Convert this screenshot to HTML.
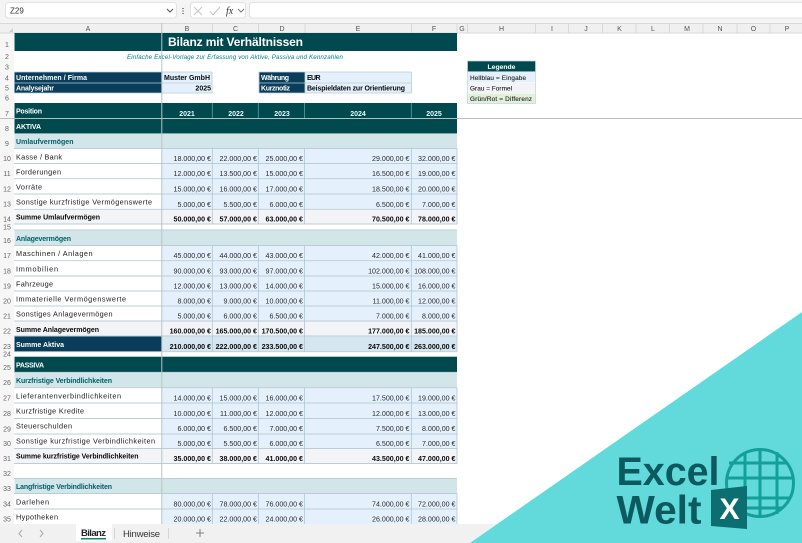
<!DOCTYPE html>
<html lang="de"><head><meta charset="utf-8"><title>Bilanz</title>
<style>
html,body{margin:0;padding:0;width:802px;height:543px;overflow:hidden;background:#fff}
svg{display:block;font-family:"Liberation Sans",sans-serif;filter:blur(.28px)}
.h{font-size:7px;fill:#555;text-anchor:middle}
.r{font-size:7px;fill:#666;text-anchor:middle}
.l{font-size:7.3px;fill:#1c1c1c}
.b{font-size:7px;font-weight:bold;fill:#0a0a0a}
.s{font-size:7px;font-weight:bold;fill:#005f69}
.w{font-size:7px;font-weight:bold;fill:#fff}
.n{font-size:7.1px;fill:#2a2a2a;text-anchor:end}
.nb{font-size:7.1px;fill:#0a0a0a;font-weight:bold;text-anchor:end}
.y{font-size:7px;fill:#e4fbff;font-weight:bold;text-anchor:middle}
.lg{font-size:6.4px;fill:#222;stroke:#222;stroke-width:.12px}
</style></head><body>
<svg width="802" height="543" viewBox="0 0 802 543" xmlns="http://www.w3.org/2000/svg">
<rect width="802" height="543" fill="#fff"/>
<!-- toolbar -->
<rect width="802" height="23" fill="#f4f4f4"/>
<rect x="5.500" y="2.500" width="171" height="15.500" rx="3" fill="#fff" stroke="#e2e2e2"/>
<text x="10" y="13.500" font-size="8" fill="#333">Z29</text>
<path d="M167 9l3 3 3-3" fill="none" stroke="#555" stroke-width="1"/>
<path d="M183 8v1M183 10.500v1M183 13v1" stroke="#444" stroke-width="1.200"/>
<rect x="190.500" y="2.500" width="55" height="15.500" rx="3" fill="#fff" stroke="#e2e2e2"/>
<path d="M194 7l8 8M202 7l-8 8M210 11l3 4 7-8" fill="none" stroke="#c4c4c4" stroke-width="1"/>
<text x="226" y="14" font-size="10" font-style="italic" font-family="Liberation Serif" fill="#333">fx</text>
<path d="M238 9l3 3 3-3" fill="none" stroke="#777" stroke-width="1"/>
<rect x="249.500" y="2.500" width="560" height="15.500" rx="3" fill="#fff" stroke="#e2e2e2"/>
<!-- col header + gutter -->
<rect y="23" width="802" height="10" fill="#f0f0f0"/>
<rect y="33" width="14" height="491" fill="#f6f6f6"/>
<path d="M0 23.500H802M0 33H802" stroke="#d9d9d9" stroke-width="1"/>
<path d="M212.500 24v9M258.500 24v9M305 24v9M411.500 24v9M457 24v9M467.500 24v9M535.500 24v9M568.500 24v9M602.500 24v9M636 24v9M669.500 24v9M703 24v9M737 24v9M770 24v9" stroke="#d2d2d2" stroke-width=".8"/>
<path d="M9 32L13 32L13 28Z" fill="#cfcfcf"/>
<g>
<text class="h" x="88" y="31">A</text><text class="h" x="187" y="31">B</text><text class="h" x="235.500" y="31">C</text><text class="h" x="282" y="31">D</text><text class="h" x="358" y="31">E</text><text class="h" x="434" y="31">F</text><text class="h" x="462" y="31">G</text><text class="h" x="501.500" y="31">H</text><text class="h" x="552" y="31">I</text><text class="h" x="586" y="31">J</text><text class="h" x="619.500" y="31">K</text><text class="h" x="653" y="31">L</text><text class="h" x="687" y="31">M</text><text class="h" x="720" y="31">N</text><text class="h" x="753.500" y="31">O</text><text class="h" x="787" y="31">P</text>
</g>
<!-- fills -->
<g>
<rect x="14.500" y="33" width="442.500" height="18" fill="#004a4f"/>
<rect x="14.500" y="72" width="147.500" height="21" fill="#0a3d5a"/>
<rect x="162" y="72" width="50" height="21" fill="#e4f1fc"/>
<rect x="259" y="72" width="46" height="21" fill="#0a3d5a"/>
<rect x="305" y="72" width="106.500" height="21" fill="#e4f1fc"/>
<rect x="14.500" y="103" width="442.500" height="30.500" fill="#004a4f"/>
<rect x="14.500" y="134" width="442.500" height="14.500" fill="#d2e6ea"/>
<rect x="162" y="148.500" width="295" height="61" fill="#e4f1fc"/>
<rect x="14.500" y="209.500" width="442.500" height="14.500" fill="#f2f4f7"/>
<rect x="14.500" y="230" width="442.500" height="15.500" fill="#d2e6ea"/>
<rect x="162" y="245.500" width="295" height="75.500" fill="#e4f1fc"/>
<rect x="14.500" y="321" width="442.500" height="15" fill="#f2f4f7"/>
<rect x="14.500" y="336" width="147.500" height="15.700" fill="#0a3d5a"/>
<rect x="162" y="336" width="295" height="15.700" fill="#d5e6f0"/>
<rect x="14.500" y="356.700" width="442.500" height="15.600" fill="#004a4f"/>
<rect x="14.500" y="372.300" width="442.500" height="15.400" fill="#d2e6ea"/>
<rect x="162" y="387.700" width="295" height="60.800" fill="#e4f1fc"/>
<rect x="14.500" y="448.500" width="442.500" height="15" fill="#f2f4f7"/>
<rect x="14.500" y="478.500" width="442.500" height="15" fill="#d2e6ea"/>
<rect x="162" y="493.500" width="295" height="31" fill="#e4f1fc"/>
</g>
<!-- grid lines -->
<path d="M14 72H212M14 83H212M14 93H212M259 72H411.500M259 83H411.500M259 93H411.500M212 72V93M259 72V93M305 72V93M411.500 72V93" stroke="#b8ccd8" stroke-width=".8" fill="none"/>
<path d="M14 148.500H457M14 163.500H457M14 178.700H457M14 194H457M14 209.300H457M14 224H457M14 230H457M14 245.500H457M14 260.700H457M14 276H457M14 291H457M14 306H457M14 321H457M14 336H457M14 351.700H457M14 372.300H457M14 387.700H457M14 403H457M14 418.500H457M14 434H457M14 448.500H457M14 463.500H457M14 478.500H457M14 493.500H457M14 509H457" stroke="#bccdd5" stroke-width=".9" fill="none"/>
<path d="M212.300 148.500V224M258.300 148.500V224M304.500 148.500V224M411.300 148.500V224M457 148.500V224M212.300 245.500V351.700M258.300 245.500V351.700M304.500 245.500V351.700M411.300 245.500V351.700M457 245.500V351.700M212.300 387.700V463.500M258.300 387.700V463.500M304.500 387.700V463.500M411.300 387.700V463.500M457 387.700V463.500M212.300 493.500V524M258.300 493.500V524M304.500 493.500V524M411.300 493.500V524M457 493.500V524" stroke="#a8c2cf" stroke-width=".7" fill="none"/>
<path d="M212.300 103V118.500M258.300 103V118.500M304.500 103V118.500M411.300 103V118.500" stroke="#5f9ea3" stroke-width=".8"/>
<!-- freeze panes -->
<path d="M0 118.500H802" stroke="#bdbdbd" stroke-width="1"/>
<path d="M161.800 23V524" stroke="#b9c3c6" stroke-width="1"/>
<!-- row numbers -->
<g>
<text class="r" x="7" y="47">1</text><text class="r" x="7" y="59">2</text><text class="r" x="7" y="69.500">3</text><text class="r" x="7" y="80.500">4</text><text class="r" x="7" y="90.500">5</text><text class="r" x="7" y="100.500">6</text><text class="r" x="7" y="116">7</text><text class="r" x="7" y="131">8</text><text class="r" x="7" y="146">9</text><text class="r" x="7" y="161">10</text><text class="r" x="7" y="176">11</text><text class="r" x="7" y="191.500">12</text><text class="r" x="7" y="206.500">13</text><text class="r" x="7" y="221.500">14</text><text class="r" x="7" y="229.500" font-size="5">15</text><text class="r" x="7" y="243">16</text><text class="r" x="7" y="258">17</text><text class="r" x="7" y="273.500">18</text><text class="r" x="7" y="288.500">19</text><text class="r" x="7" y="303.500">20</text><text class="r" x="7" y="318.500">21</text><text class="r" x="7" y="333.500">22</text><text class="r" x="7" y="349">23</text><text class="r" x="7" y="356.500" font-size="5">24</text><text class="r" x="7" y="370">25</text><text class="r" x="7" y="385">26</text><text class="r" x="7" y="400.500">27</text><text class="r" x="7" y="416">28</text><text class="r" x="7" y="431.500">29</text><text class="r" x="7" y="446">30</text><text class="r" x="7" y="461">31</text><text class="r" x="7" y="476">32</text><text class="r" x="7" y="491">33</text><text class="r" x="7" y="506.500">34</text><text class="r" x="7" y="521.500">35</text>
</g>
<!-- top block -->
<text x="235.500" y="46" text-anchor="middle" font-size="12" font-weight="bold" fill="#fff" textLength="135">Bilanz mit Verhältnissen</text>
<text x="235" y="59" text-anchor="middle" font-size="6.200" font-style="italic" fill="#007d8c" textLength="216">Einfache Excel-Vorlage zur Erfassung von Aktive, Passiva und Kennzahlen</text>
<text class="w" x="16" y="80" textLength="71">Unternehmen / Firma</text>
<text class="w" x="16" y="90.500" textLength="38">Analysejahr</text>
<text class="b" x="164" y="80" textLength="46">Muster GmbH</text>
<text class="b" x="211" y="90.500" text-anchor="end">2025</text>
<text class="w" x="261" y="80" textLength="28">Währung</text>
<text class="w" x="261" y="90.500" textLength="29">Kurznotiz</text>
<text class="b" x="307" y="80" textLength="13.500">EUR</text>
<text class="b" x="307" y="90.500" textLength="98">Beispieldaten zur Orientierung</text>
<!-- legend -->
<rect x="467.500" y="61" width="68" height="10.500" fill="#004a4f"/>
<rect x="467.500" y="72" width="68" height="10.500" fill="#e4f1fc"/>
<rect x="467.500" y="83" width="68" height="10" fill="#f2f4f7"/>
<rect x="467.500" y="93.500" width="68" height="10" fill="#e2f0d9"/>
<rect x="467.500" y="61" width="68" height="42.500" fill="none" stroke="#bfd3d6" stroke-width=".7"/>
<text x="501.500" y="69" text-anchor="middle" font-size="6.800" font-weight="bold" fill="#fff">Legende</text>
<text class="lg" x="470" y="80" textLength="56">Hellblau = Eingabe</text>
<text class="lg" x="470" y="90.500" textLength="42">Grau = Formel</text>
<text class="lg" x="470" y="101" textLength="62">Grün/Rot = Differenz</text>
<!-- headers -->
<text class="w" x="16" y="113.500" textLength="26">Position</text>
<text class="y" x="187" y="116">2021</text><text class="y" x="236" y="116">2022</text><text class="y" x="282" y="116">2023</text><text class="y" x="358" y="116">2024</text><text class="y" x="434" y="116">2025</text>
<text class="w" x="16" y="129" textLength="25">AKTIVA</text>
<text class="s" x="16" y="144" textLength="57.500">Umlaufvermögen</text>
<text class="l" x="16" y="159.500" textLength="46">Kasse / Bank</text>
<text class="l" x="16" y="174.500" textLength="45">Forderungen</text>
<text class="l" x="16" y="189.500" textLength="26">Vorräte</text>
<text class="l" x="16" y="204.500" textLength="136">Sonstige kurzfristige Vermögenswerte</text>
<text class="b" x="16" y="219.500" textLength="84">Summe Umlaufvermögen</text>
<text class="s" x="16" y="241" textLength="55">Anlagevermögen</text>
<text class="l" x="16" y="256" textLength="76.500">Maschinen / Anlagen</text>
<text class="l" x="16" y="271.500" textLength="42">Immobilien</text>
<text class="l" x="16" y="286.500" textLength="37">Fahrzeuge</text>
<text class="l" x="16" y="301.500" textLength="110">Immaterielle Vermögenswerte</text>
<text class="l" x="16" y="316.500" textLength="96.500">Sonstiges Anlagevermögen</text>
<text class="b" x="16" y="332" textLength="83">Summe Anlagevermögen</text>
<text class="w" x="16" y="347" textLength="48">Summe Aktiva</text>
<text class="w" x="16" y="367.500" textLength="28">PASSIVA</text>
<text class="s" x="16" y="383" textLength="96">Kurzfristige Verbindlichkeiten</text>
<text class="l" x="16" y="398.500" textLength="105">Lieferantenverbindlichkeiten</text>
<text class="l" x="16" y="413.500" textLength="68">Kurzfristige Kredite</text>
<text class="l" x="16" y="428.500" textLength="56">Steuerschulden</text>
<text class="l" x="16" y="443.500" textLength="139">Sonstige kurzfristige Verbindlichkeiten</text>
<text class="b" x="16" y="458.500" textLength="122.500">Summe kurzfristige Verbindlichkeiten</text>
<text class="s" x="16" y="489" textLength="96">Langfristige Verbindlichkeiten</text>
<text class="l" x="16" y="504.500" textLength="33">Darlehen</text>
<text class="l" x="16" y="519.500" textLength="42">Hypotheken</text>
<!-- numbers -->
<g>
<text class="n" x="211" y="161">18.000,00 €</text><text class="n" x="257" y="161">22.000,00 €</text><text class="n" x="303" y="161">25.000,00 €</text><text class="n" x="409.500" y="161">29.000,00 €</text><text class="n" x="455.500" y="161">32.000,00 €</text>
<text class="n" x="211" y="176">12.000,00 €</text><text class="n" x="257" y="176">13.500,00 €</text><text class="n" x="303" y="176">15.000,00 €</text><text class="n" x="409.500" y="176">16.500,00 €</text><text class="n" x="455.500" y="176">19.000,00 €</text>
<text class="n" x="211" y="191.500">15.000,00 €</text><text class="n" x="257" y="191.500">16.000,00 €</text><text class="n" x="303" y="191.500">17.000,00 €</text><text class="n" x="409.500" y="191.500">18.500,00 €</text><text class="n" x="455.500" y="191.500">20.000,00 €</text>
<text class="n" x="211" y="207">5.000,00 €</text><text class="n" x="257" y="207">5.500,00 €</text><text class="n" x="303" y="207">6.000,00 €</text><text class="n" x="409.500" y="207">6.500,00 €</text><text class="n" x="455.500" y="207">7.000,00 €</text>
<text class="nb" x="211" y="221.500">50.000,00 €</text><text class="nb" x="257" y="221.500">57.000,00 €</text><text class="nb" x="303" y="221.500">63.000,00 €</text><text class="nb" x="409.500" y="221.500">70.500,00 €</text><text class="nb" x="455.500" y="221.500">78.000,00 €</text>
<text class="n" x="211" y="258">45.000,00 €</text><text class="n" x="257" y="258">44.000,00 €</text><text class="n" x="303" y="258">43.000,00 €</text><text class="n" x="409.500" y="258">42.000,00 €</text><text class="n" x="455.500" y="258">41.000,00 €</text>
<text class="n" x="211" y="273.500">90.000,00 €</text><text class="n" x="257" y="273.500">93.000,00 €</text><text class="n" x="303" y="273.500">97.000,00 €</text><text class="n" x="409.500" y="273.500">102.000,00 €</text><text class="n" x="455.500" y="273.500">108.000,00 €</text>
<text class="n" x="211" y="288.500">12.000,00 €</text><text class="n" x="257" y="288.500">13.000,00 €</text><text class="n" x="303" y="288.500">14.000,00 €</text><text class="n" x="409.500" y="288.500">15.000,00 €</text><text class="n" x="455.500" y="288.500">16.000,00 €</text>
<text class="n" x="211" y="303.500">8.000,00 €</text><text class="n" x="257" y="303.500">9.000,00 €</text><text class="n" x="303" y="303.500">10.000,00 €</text><text class="n" x="409.500" y="303.500">11.000,00 €</text><text class="n" x="455.500" y="303.500">12.000,00 €</text>
<text class="n" x="211" y="318.500">5.000,00 €</text><text class="n" x="257" y="318.500">6.000,00 €</text><text class="n" x="303" y="318.500">6.500,00 €</text><text class="n" x="409.500" y="318.500">7.000,00 €</text><text class="n" x="455.500" y="318.500">8.000,00 €</text>
<text class="nb" x="211" y="333.500">160.000,00 €</text><text class="nb" x="257" y="333.500">165.000,00 €</text><text class="nb" x="303" y="333.500">170.500,00 €</text><text class="nb" x="409.500" y="333.500">177.000,00 €</text><text class="nb" x="455.500" y="333.500">185.000,00 €</text>
<text class="nb" x="211" y="349">210.000,00 €</text><text class="nb" x="257" y="349">222.000,00 €</text><text class="nb" x="303" y="349">233.500,00 €</text><text class="nb" x="409.500" y="349">247.500,00 €</text><text class="nb" x="455.500" y="349">263.000,00 €</text>
<text class="n" x="211" y="400.500">14.000,00 €</text><text class="n" x="257" y="400.500">15.000,00 €</text><text class="n" x="303" y="400.500">16.000,00 €</text><text class="n" x="409.500" y="400.500">17.500,00 €</text><text class="n" x="455.500" y="400.500">19.000,00 €</text>
<text class="n" x="211" y="416">10.000,00 €</text><text class="n" x="257" y="416">11.000,00 €</text><text class="n" x="303" y="416">12.000,00 €</text><text class="n" x="409.500" y="416">12.000,00 €</text><text class="n" x="455.500" y="416">13.000,00 €</text>
<text class="n" x="211" y="431">6.000,00 €</text><text class="n" x="257" y="431">6.500,00 €</text><text class="n" x="303" y="431">7.000,00 €</text><text class="n" x="409.500" y="431">7.500,00 €</text><text class="n" x="455.500" y="431">8.000,00 €</text>
<text class="n" x="211" y="446">5.000,00 €</text><text class="n" x="257" y="446">5.500,00 €</text><text class="n" x="303" y="446">6.000,00 €</text><text class="n" x="409.500" y="446">6.500,00 €</text><text class="n" x="455.500" y="446">7.000,00 €</text>
<text class="nb" x="211" y="461">35.000,00 €</text><text class="nb" x="257" y="461">38.000,00 €</text><text class="nb" x="303" y="461">41.000,00 €</text><text class="nb" x="409.500" y="461">43.500,00 €</text><text class="nb" x="455.500" y="461">47.000,00 €</text>
<text class="n" x="211" y="506.500">80.000,00 €</text><text class="n" x="257" y="506.500">78.000,00 €</text><text class="n" x="303" y="506.500">76.000,00 €</text><text class="n" x="409.500" y="506.500">74.000,00 €</text><text class="n" x="455.500" y="506.500">72.000,00 €</text>
<text class="n" x="211" y="521.500">20.000,00 €</text><text class="n" x="257" y="521.500">22.000,00 €</text><text class="n" x="303" y="521.500">24.000,00 €</text><text class="n" x="409.500" y="521.500">26.000,00 €</text><text class="n" x="455.500" y="521.500">28.000,00 €</text>
</g>
<!-- tab bar -->
<rect y="524" width="802" height="19" fill="#f1f1f1"/>
<path d="M76 524H112V539a2 2 0 0 1-2 2H78a2 2 0 0 1-2-2Z" fill="#fff"/>
<text x="81" y="536" font-size="9.500" fill="#222" font-weight="bold" textLength="25">Bilanz</text>
<rect x="81" y="538" width="25" height="1.500" fill="#108a5a"/>
<path d="M114.500 528V539M168.500 528V539" stroke="#cfcfcf" stroke-width=".8"/>
<text x="123" y="537" font-size="9.500" fill="#333" textLength="37">Hinweise</text>
<path d="M22 530l-3 3.500 3 3.500M40 530l3 3.500-3 3.500" fill="none" stroke="#aaa" stroke-width="1"/>
<path d="M200 529v8M196 533h8" stroke="#666" stroke-width=".8"/>
<!-- logo -->
<path d="M802 312V543H470Z" fill="#62d9da"/>
<g fill="none" stroke="#12a098" stroke-width="3">
<circle cx="760" cy="483" r="33.500"/>
<path d="M745 452V517M760 449V517M777 452V514M729 463H788M726 478H794M745 498H790M747 508H782"/>
</g>
<path d="M711 490L747 486V529L711 526Z" fill="#0c6e70"/>
<text x="729.500" y="519" text-anchor="middle" font-size="30" font-weight="bold" fill="#fff">X</text>
<text x="616.500" y="485" font-size="40" font-weight="bold" fill="#0c5a60" textLength="103" lengthAdjust="spacingAndGlyphs">Excel</text>
<text x="616.500" y="523.500" font-size="40" font-weight="bold" fill="#0c5a60" textLength="85" lengthAdjust="spacingAndGlyphs">Welt</text>
</svg>
</body></html>
